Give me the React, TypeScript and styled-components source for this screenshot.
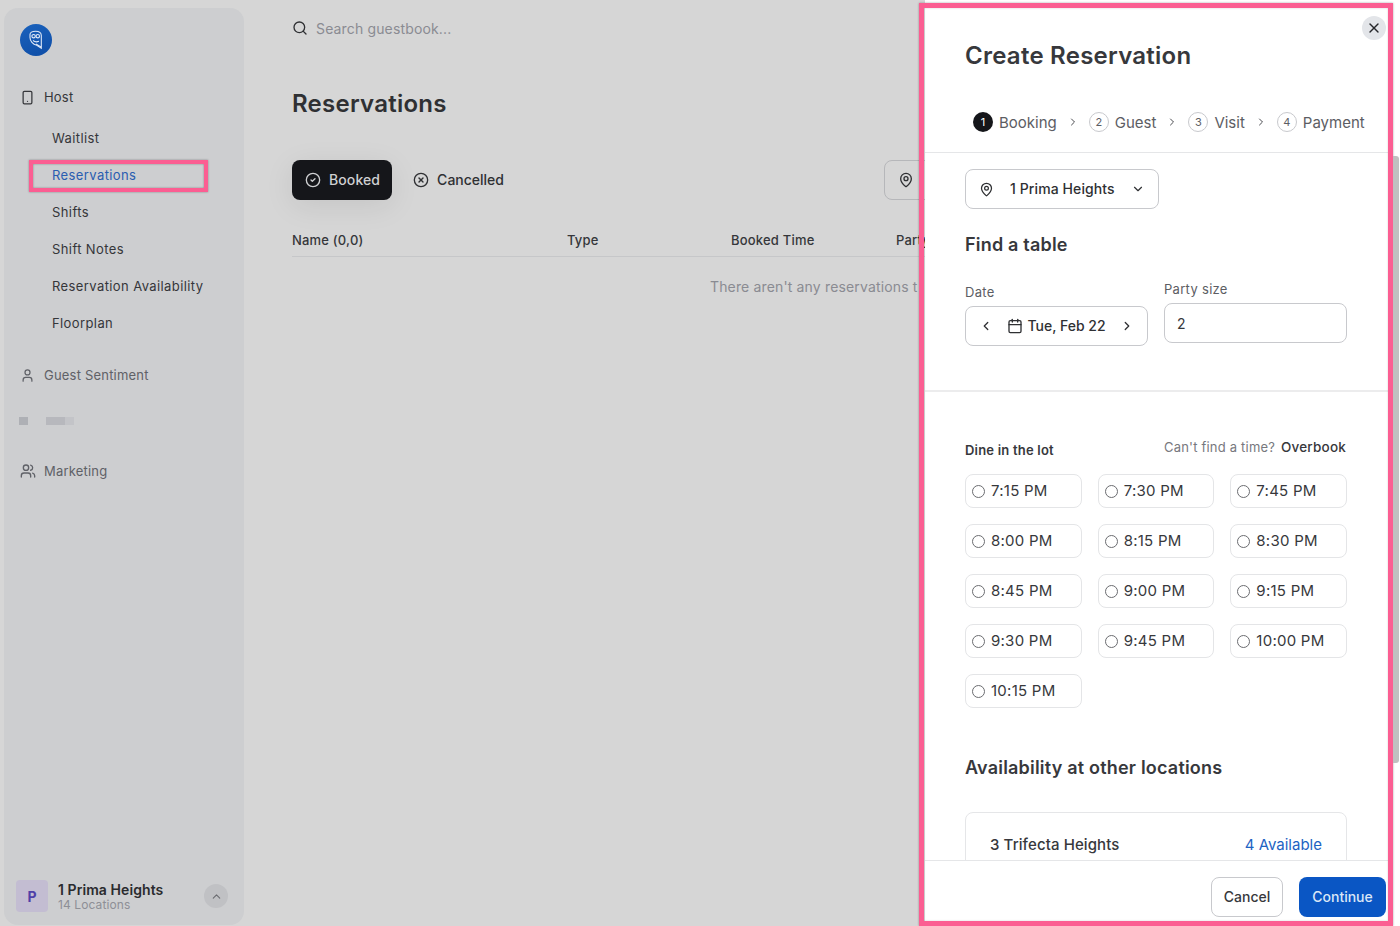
import React from "react";
import styled, { createGlobalStyle } from "styled-components";
import {
  Calendar,
  ChevronDown,
  ChevronLeft,
  ChevronRight,
  ChevronUp,
  CircleCheck,
  CircleX,
  MapPin,
  Search,
  Smartphone,
  User,
  Users,
  X,
} from "lucide-react";

const PINK = "#fb5e92";

const GlobalStyle = createGlobalStyle`
  html, body {
    margin: 0;
    padding: 0;
    height: 926px;
    overflow: hidden;
    background: #d6d6d6;
    font-family: "Inter", "Liberation Sans", sans-serif;
    color: #2f3033;
  }
  * { box-sizing: border-box; }
`;

const SUB_ITEMS = [
  "Waitlist",
  "Reservations",
  "Shifts",
  "Shift Notes",
  "Reservation Availability",
  "Floorplan",
];

const STEPS = ["Booking", "Guest", "Visit", "Payment"];

const SLOTS = [
  "7:15 PM",
  "7:30 PM",
  "7:45 PM",
  "8:00 PM",
  "8:15 PM",
  "8:30 PM",
  "8:45 PM",
  "9:00 PM",
  "9:15 PM",
  "9:30 PM",
  "9:45 PM",
  "10:00 PM",
  "10:15 PM",
];

function OwlLogo() {
  return (
    <svg width="16" height="20" viewBox="0 0 16 20" fill="none" stroke="#dfe8f7" strokeWidth="1.1">
      <path d="M2 4.5C2 2.5 4 1.2 7.5 1.2c3.5 0 5.8 1.5 5.8 4.3v12.8l-4.5-3C4.8 14.5 2 11 2 7.5z" />
      <circle cx="5.6" cy="6.2" r="1.7" />
      <circle cx="9.8" cy="6.2" r="1.7" />
      <path d="M5 10.5c1.5 1.3 4 1.6 6 .8M8 14l5 3" />
    </svg>
  );
}

export default function App(): React.ReactElement {
  return (
    <Page>
      <GlobalStyle />
      <Sidebar>
        <Logo>
          <OwlLogo />
        </Logo>
        <NavRow>
          <Smartphone size={15} strokeWidth={2} />
          Host
        </NavRow>
        <SubList>
          {SUB_ITEMS.map((item) => (
            <SubItem key={item} $active={item === "Reservations"}>
              {item}
            </SubItem>
          ))}
        </SubList>
        <NavRow $muted $top={25}>
          <User size={15} />
          Guest Sentiment
        </NavRow>
        <BlurRow>
          <BlurBlock $width={9} $tone="#aeb0b5" />
          <BlurBlock $width={19} $tone="#b7b8bd" $left={18} />
          <BlurBlock $width={9} $tone="#c3c4c8" />
        </BlurRow>
        <NavRow $muted $top={36} $gap={8}>
          <Users size={16} />
          Marketing
        </NavRow>
        <Account>
          <Avatar>P</Avatar>
          <AccountText>
            <AccountName>1 Prima Heights</AccountName>
            <AccountSub>14 Locations</AccountSub>
          </AccountText>
          <RoundButton>
            <ChevronUp size={13} />
          </RoundButton>
        </Account>
      </Sidebar>

      <Main>
        <SearchBar>
          <Search size={16} color="#2f3033" />
          Search guestbook...
        </SearchBar>
        <PageTitle>Reservations</PageTitle>
        <TabRow>
          <Tab $active>
            <CircleCheck size={16} />
            Booked
          </Tab>
          <Tab>
            <CircleX size={16} />
            Cancelled
          </Tab>
          <FilterButton>
            <MapPin size={16} />
          </FilterButton>
        </TabRow>
        <TableHead>
          <HeadCell $width={275}>Name (0,0)</HeadCell>
          <HeadCell $width={164}>Type</HeadCell>
          <HeadCell $width={165}>Booked Time</HeadCell>
          <HeadCell $width={120}>Party</HeadCell>
        </TableHead>
        <EmptyText>There aren't any reservations t</EmptyText>
      </Main>

      <Panel>
        <CloseButton>
          <X size={16} strokeWidth={2} />
        </CloseButton>
        <PanelTitle>Create Reservation</PanelTitle>
        <Stepper>
          {STEPS.map((step, i) => (
            <React.Fragment key={step}>
              {i > 0 && <ChevronRight size={12} color="#4a4b50" />}
              <Step>
                <StepDot $active={i === 0}>{i + 1}</StepDot>
                {step}
              </Step>
            </React.Fragment>
          ))}
        </Stepper>
        <PanelBody>
          <FormSection>
            <LocationSelect>
              <MapPin size={15} />
              <SelectLabel>1 Prima Heights</SelectLabel>
              <ChevronDown size={14} />
            </LocationSelect>
            <SectionTitle $top={24}>Find a table</SectionTitle>
            <FieldGrid>
              <Field $offset={3}>
                <FieldLabel>Date</FieldLabel>
                <DateBox>
                  <ChevronLeft size={14} strokeWidth={2.2} />
                  <DateValue>
                    <Calendar size={16} />
                    Tue, Feb 22
                  </DateValue>
                  <ChevronRight size={14} strokeWidth={2.2} />
                </DateBox>
              </Field>
              <Field>
                <FieldLabel>Party size</FieldLabel>
                <PartyBox>2</PartyBox>
              </Field>
            </FieldGrid>
          </FormSection>
          <TimesSection>
            <TimesHead>
              <DineLabel>Dine in the lot</DineLabel>
              <Overbook>
                Can't find a time? <strong>Overbook</strong>
              </Overbook>
            </TimesHead>
            <SlotGrid>
              {SLOTS.map((slot) => (
                <Slot key={slot}>
                  <Radio />
                  {slot}
                </Slot>
              ))}
            </SlotGrid>
            <SectionTitle $top={48}>Availability at other locations</SectionTitle>
            <LocationCard>
              <LocationName>3 Trifecta Heights</LocationName>
              <AvailableLink>4 Available</AvailableLink>
            </LocationCard>
          </TimesSection>
        </PanelBody>
        <PanelFooter>
          <CancelButton>Cancel</CancelButton>
          <ContinueButton>Continue</ContinueButton>
        </PanelFooter>
        <PinkFrame />
        <ScrollThumb />
      </Panel>
    </Page>
  );
}

const Page = styled.div`
  position: relative;
  width: 1400px;
  height: 926px;
  overflow: hidden;
  display: flex;
  background: #d6d6d6;
`;

const Sidebar = styled.aside`
  flex: 0 0 240px;
  margin: 8px 0 1px 4px;
  padding: 16px 16px 13px;
  display: flex;
  flex-direction: column;
  background: #cdced0;
  border-radius: 14px;
`;

const Logo = styled.div`
  width: 32px;
  height: 32px;
  border-radius: 50%;
  display: flex;
  align-items: center;
  justify-content: center;
  background: linear-gradient(160deg, #1a62bd, #0e4da6);
`;

const NavRow = styled.div<{ $muted?: boolean; $top?: number; $gap?: number }>`
  height: 20px;
  margin-top: ${(p) => p.$top ?? 31}px;
  display: flex;
  align-items: center;
  gap: ${(p) => p.$gap ?? 9}px;
  font-size: 13px;
  letter-spacing: 0.2px;
  color: ${(p) => (p.$muted ? "#5f6167" : "#35363a")};
`;

const SubList = styled.div`
  margin: 16px 0 0 9px;
  display: flex;
  flex-direction: column;
  gap: 5px;
`;

const SubItem = styled.div<{ $active?: boolean }>`
  width: 179px;
  height: 32px;
  padding-bottom: ${(p) => (p.$active ? 2 : 3)}px;
  padding-left: ${(p) => (p.$active ? 19 : 23)}px;
  display: flex;
  align-items: center;
  font-size: 13px;
  letter-spacing: 0.4px;
  white-space: nowrap;
  color: ${(p) => (p.$active ? "#2a5db0" : "#35363a")};
  border: ${(p) => (p.$active ? `4px solid ${PINK}` : "none")};
  box-shadow: ${(p) => (p.$active ? "0 0 2px rgba(0, 0, 0, 0.35), inset 0 0 2px rgba(0, 0, 0, 0.4)" : "none")};
`;

const BlurRow = styled.div`
  margin: 32px 0 0 -1px;
  height: 8px;
  display: flex;
  filter: blur(0.4px);
`;

const BlurBlock = styled.span<{ $width: number; $tone: string; $left?: number }>`
  width: ${(p) => p.$width}px;
  margin-left: ${(p) => p.$left ?? 0}px;
  background: ${(p) => p.$tone};
`;

const Account = styled.div`
  margin-top: auto;
  margin-left: -4px;
  display: flex;
  align-items: center;
`;

const Avatar = styled.div`
  width: 32px;
  height: 32px;
  flex: none;
  border-radius: 4px;
  display: flex;
  align-items: center;
  justify-content: center;
  background: #c3bdd2;
  color: #4f3fa8;
  font-size: 14px;
  font-weight: 700;
`;

const AccountText = styled.div`
  margin-left: 10px;
  flex: 1;
`;

const AccountName = styled.div`
  font-size: 14px;
  line-height: 17px;
  font-weight: 600;
  letter-spacing: 0.07px;
  color: #2a2b2e;
`;

const AccountSub = styled.div`
  font-size: 12px;
  line-height: 13px;
  letter-spacing: 0.1px;
  color: #8e8f96;
`;

const RoundButton = styled.div`
  width: 24px;
  height: 24px;
  border-radius: 50%;
  display: flex;
  align-items: center;
  justify-content: center;
  background: #c0c1c4;
  color: #6a6b70;
`;

const Main = styled.main`
  flex: 1;
  min-width: 0;
  padding: 18px 0 0 48px;
`;

const SearchBar = styled.div`
  height: 20px;
  display: flex;
  align-items: center;
  gap: 8px;
  font-size: 14px;
  letter-spacing: 0.15px;
  color: #8a8b92;
`;

const PageTitle = styled.h1`
  margin: 50px 0 0;
  font-size: 24px;
  line-height: 32px;
  font-weight: 600;
  letter-spacing: 0.25px;
  color: #2f3033;
`;

const TabRow = styled.div`
  margin-top: 40px;
  height: 40px;
  display: flex;
  align-items: center;
`;

const Tab = styled.div<{ $active?: boolean }>`
  height: 40px;
  padding: 0 12px 1px 13px;
  display: flex;
  align-items: center;
  gap: 8px;
  border-radius: 8px;
  font-size: 14px;
  letter-spacing: ${(p) => (p.$active ? 0.1 : 0)}px;
  font-weight: 500;
  color: ${(p) => (p.$active ? "#cfd0d2" : "#2f3033")};
  background: ${(p) => (p.$active ? "#15161a" : "transparent")};
  box-shadow: ${(p) => (p.$active ? "0 6px 30px rgba(0, 0, 0, 0.08)" : "none")};
  margin-right: ${(p) => (p.$active ? 8 : 0)}px;
`;

const FilterButton = styled.div`
  margin-left: 368px;
  height: 40px;
  width: 60px;
  padding-left: 13px;
  flex: none;
  display: flex;
  align-items: center;
  border: 1px solid #b6b7ba;
  border-radius: 8px;
`;

const TableHead = styled.div`
  margin-top: 30px;
  height: 27px;
  padding-bottom: 7px;
  display: flex;
  align-items: center;
  border-bottom: 1px solid #c6c7c9;
`;

const HeadCell = styled.div<{ $width: number }>`
  flex: 0 0 ${(p) => p.$width}px;
  font-size: 13px;
  font-weight: 500;
  letter-spacing: 0.2px;
  color: #35363a;
`;

const EmptyText = styled.div`
  margin: 20px 0 0 418px;
  font-size: 14px;
  line-height: 20px;
  letter-spacing: 0.15px;
  white-space: nowrap;
  color: #8a8b92;
`;

const Panel = styled.section`
  position: absolute;
  left: 925px;
  top: 0;
  right: 0;
  bottom: 0;
  padding: 8px 12px 5px 0;
  display: flex;
  flex-direction: column;
  background: #fff;
`;

const PinkFrame = styled.div`
  position: absolute;
  left: -6px;
  top: 3px;
  width: 474px;
  height: 923px;
  border: 5.5px solid ${PINK};
  box-shadow: 0 0 2px rgba(0, 0, 0, 0.35), inset 0 0 2px rgba(0, 0, 0, 0.2);
  pointer-events: none;
`;

const ScrollThumb = styled.div`
  position: absolute;
  left: 468px;
  top: 156px;
  width: 6px;
  height: 607px;
  border-radius: 0 3px 3px 0;
  background: #c0c0c0;
`;

const CloseButton = styled.div`
  position: absolute;
  right: 14px;
  top: 16px;
  width: 24px;
  height: 24px;
  border-radius: 50%;
  display: flex;
  align-items: center;
  justify-content: center;
  background: #e3e5e9;
  color: #26272b;
`;

const PanelTitle = styled.h2`
  margin: 32px 0 0 40px;
  font-size: 24px;
  line-height: 32px;
  font-weight: 600;
  letter-spacing: 0.25px;
  color: #37383c;
`;

const Stepper = styled.div`
  margin-top: 38px;
  padding: 0 0 18px 48px;
  display: flex;
  align-items: center;
  gap: 10px;
  border-bottom: 1px solid #e5e6e8;
`;

const Step = styled.div`
  height: 24px;
  display: flex;
  align-items: center;
  gap: 6px;
  font-size: 15px;
  color: #5c5d63;
`;

const StepDot = styled.span<{ $active?: boolean }>`
  width: 20px;
  height: 20px;
  border-radius: 50%;
  display: flex;
  align-items: center;
  justify-content: center;
  font-size: 11px;
  color: ${(p) => (p.$active ? "#fff" : "#5c5d63")};
  background: ${(p) => (p.$active ? "#15161a" : "#fff")};
  border: ${(p) => (p.$active ? "none" : "1px solid #c8c9cd")};
`;

const PanelBody = styled.div`
  flex: 1;
  min-height: 0;
  overflow: hidden;
`;

const FormSection = styled.div`
  padding: 16px 41px 44px 40px;
  border-bottom: 2px solid #ececed;
`;

const LocationSelect = styled.div`
  width: 194px;
  height: 40px;
  padding: 0 13px;
  display: flex;
  align-items: center;
  border: 1px solid #c8c9cd;
  border-radius: 8px;
  color: #2f3033;
`;

const SelectLabel = styled.span`
  flex: 1;
  margin: 0 0 1px 16px;
  font-size: 14px;
  white-space: nowrap;
  font-weight: 500;
  letter-spacing: 0.1px;
`;

const SectionTitle = styled.h3<{ $top: number }>`
  margin: ${(p) => p.$top}px 0 0;
  font-size: 18px;
  line-height: 24px;
  font-weight: 600;
  letter-spacing: 0.2px;
  color: #37383c;
`;

const FieldGrid = styled.div`
  margin-top: 23px;
  display: grid;
  grid-template-columns: 1fr 1fr;
  gap: 16px;
`;

const Field = styled.div<{ $offset?: number }>`
  padding-top: ${(p) => p.$offset ?? 0}px;
`;

const FieldLabel = styled.div`
  font-size: 13px;
  line-height: 18px;
  margin-bottom: 5px;
  letter-spacing: 0.3px;
  color: #5c5d63;
`;

const DateBox = styled.div`
  height: 40px;
  padding: 0 13px;
  display: flex;
  align-items: center;
  justify-content: space-between;
  border: 1px solid #c8c9cd;
  border-radius: 8px;
  color: #2f3033;
`;

const DateValue = styled.span`
  display: flex;
  align-items: center;
  gap: 4px;
  padding-bottom: 1px;
  font-size: 14px;
  font-weight: 500;
`;

const PartyBox = styled.div`
  height: 40px;
  padding-left: 12px;
  display: flex;
  align-items: center;
  border: 1px solid #c8c9cd;
  border-radius: 8px;
  font-size: 14px;
  color: #37383c;
`;

const TimesSection = styled.div`
  padding: 45px 41px 40px 40px;
`;

const TimesHead = styled.div`
  height: 37px;
  display: flex;
  justify-content: space-between;
`;

const DineLabel = styled.span`
  margin-top: 3px;
  font-size: 13px;
  line-height: 20px;
  font-weight: 600;
  letter-spacing: 0.2px;
  color: #37383c;
`;

const Overbook = styled.span`
  margin-right: 1px;
  font-size: 13px;
  line-height: 20px;
  letter-spacing: 0.2px;
  color: #77787e;

  strong {
    margin-left: 2px;
    font-weight: 500;
    font-size: 13.5px;
    color: #37383c;
  }
`;

const SlotGrid = styled.div`
  display: grid;
  grid-template-columns: repeat(3, 1fr);
  gap: 16px;
`;

const Slot = styled.div`
  height: 34px;
  padding: 0 0 1px 6px;
  display: flex;
  align-items: center;
  gap: 6px;
  border: 1px solid #e4e5e7;
  border-radius: 8px;
  font-size: 15px;
  letter-spacing: 0.25px;
  color: #37383c;
`;

const Radio = styled.span`
  width: 13px;
  height: 13px;
  margin-top: 1px;
  border-radius: 50%;
  border: 1px solid #6b6c70;
`;

const LocationCard = styled.div`
  margin-top: 32px;
  height: 90px;
  padding: 22px 24px 0;
  display: flex;
  justify-content: space-between;
  border: 1px solid #e5e6e8;
  border-radius: 8px;
  font-size: 15px;
  line-height: 20px;
`;

const LocationName = styled.span`
  font-weight: 500;
  letter-spacing: 0.1px;
  color: #37383c;
`;

const AvailableLink = styled.span`
  color: #1d63c3;
`;

const PanelFooter = styled.div`
  padding: 16px 2px 4px 0;
  display: flex;
  justify-content: flex-end;
  gap: 16px;
  background: #fff;
  border-top: 1px solid #e5e6e8;
`;

const CancelButton = styled.div`
  width: 72px;
  height: 40px;
  padding-bottom: 1px;
  display: flex;
  align-items: center;
  justify-content: center;
  border: 1px solid #c8c9cd;
  border-radius: 8px;
  font-size: 14px;
  font-weight: 500;
  color: #37383c;
`;

const ContinueButton = styled.div`
  width: 87px;
  height: 40px;
  padding-bottom: 1px;
  display: flex;
  align-items: center;
  justify-content: center;
  border-radius: 8px;
  background: #0a56c4;
  font-size: 14px;
  font-weight: 500;
  color: #dbe6f7;
`;
